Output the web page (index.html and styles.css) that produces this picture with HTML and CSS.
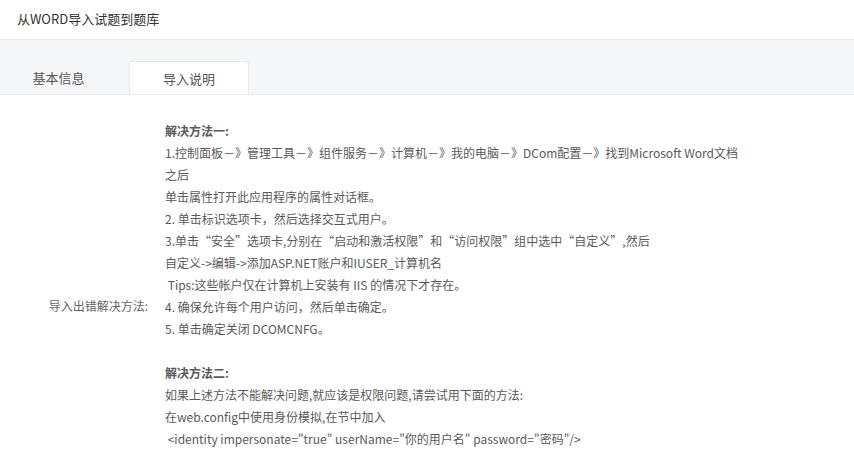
FILE: index.html
```html
<!DOCTYPE html>
<html lang="zh-CN">
<head>
  <meta charset="utf-8">
  <title>从WORD导入试题到题库</title>
  <link rel="stylesheet" href="styles.css">
</head>
<body>
  <div class="page-title">从WORD导入试题到题库</div>

  <div class="tab-bar">
    <div class="tab">基本信息</div>
    <div class="tab active">导入说明</div>
  </div>

  <div class="form-row">
    <div class="form-label">导入出错解决方法:</div>
    <div class="form-content">
      <p class="head">解决方法一:</p>
      <p>1.控制面板－》管理工具－》组件服务－》计算机－》我的电脑－》DCom配置－》找到Microsoft Word文档</p>
      <p>之后</p>
      <p>单击属性打开此应用程序的属性对话框。</p>
      <p>2. 单击标识选项卡，然后选择交互式用户。</p>
      <p>3.单击“安全”选项卡,分别在“启动和激活权限”和“访问权限”组中选中“自定义”,然后</p>
      <p>自定义-&gt;编辑-&gt;添加ASP.NET账户和IUSER_计算机名</p>
      <p>&nbsp;Tips:这些帐户仅在计算机上安装有 IIS 的情况下才存在。</p>
      <p>4. 确保允许每个用户访问，然后单击确定。</p>
      <p>5. 单击确定关闭 DCOMCNFG。</p>
      <p>&nbsp;</p>
      <p class="head">解决方法二:</p>
      <p>如果上述方法不能解决问题,就应该是权限问题,请尝试用下面的方法:</p>
      <p>在web.config中使用身份模拟,在节中加入</p>
      <p>&nbsp;&lt;identity impersonate="true" userName="你的用户名" password="密码"/&gt;</p>
    </div>
  </div>
</body>
</html>
```

FILE: styles.css
```css
* { margin: 0; padding: 0; box-sizing: border-box; }
body {
  font-family: "Noto Sans CJK SC", "Noto Sans", sans-serif;
  background: #fff;
  color: #333;
  overflow: hidden;
}
.page-title {
  height: 40px;
  line-height: 38px;
  padding-left: 17px;
  font-size: 13px;
  color: #333;
  border-bottom: 1px solid #e6e8eb;
}
.tab-bar {
  display: flex;
  gap: 12px;
  height: 55px;
  padding-top: 21px;
  background: #f5f6f8;
  border-bottom: 1px solid #eceef1;
}
.tab {
  width: 117px;
  text-align: center;
  font-size: 13px;
  line-height: 34px;
  color: #555;
}
.tab.active {
  width: 120px;
  background: #fff;
  border: 1px solid #e8eaed;
  border-bottom: none;
  border-radius: 3px 3px 0 0;
}
.form-row {
  display: flex;
  align-items: center;
  padding-top: 25px;
}
.form-label {
  width: 150px;
  padding-right: 2px;
  padding-top: 30px;
  text-align: right;
  font-size: 12px;
  color: #666;
}
.form-content {
  padding-left: 15px;
  padding-bottom: 10px;
  font-size: 12px;
  line-height: 22px;
  color: #5a5a5a;
}
.form-content .head {
  font-weight: bold;
}
```
